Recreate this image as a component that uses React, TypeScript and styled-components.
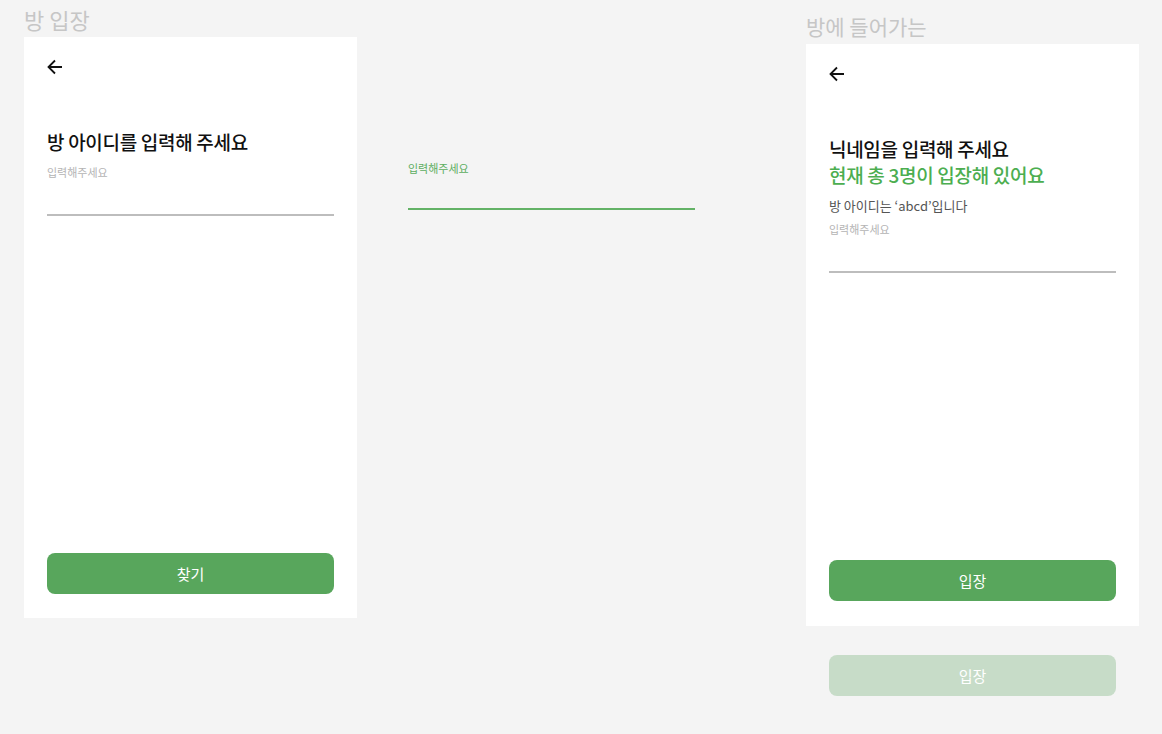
import React from 'react';
import styled, {createGlobalStyle} from 'styled-components';

const Colors = {
  canvas: '#f4f4f4',
  white: '#ffffff',
  black: '#111111',
  label: '#c6c6c6',
  placeholder: '#b4b4b4',
  line: '#bdbdbd',
  green: '#58a65c',
  greenText: '#4cae50',
  greenSoft: '#c7dcc8',
  gray: '#555555',
};

const GlobalStyle = createGlobalStyle`
  html, body {
    margin: 0;
    padding: 0;
    background: ${Colors.canvas};
  }
  body {
    font-family: 'Noto Sans CJK KR', 'Noto Sans', sans-serif;
  }
`;

const BackArrow = () => (
  <ArrowIcon viewBox="0 0 16 16" fill="none">
    <path d="M15 8H1.8M8 1.5L1.5 8L8 14.5" stroke="#111" strokeWidth="1.8" />
  </ArrowIcon>
);

const App = () => (
  <Canvas>
    <GlobalStyle/>
    <Board $x={24} $y={3}>
      <BoardLabel $size={22}>방 입장</BoardLabel>
      <Frame $height={581} $bottom={24}>
        <BackArrow/>
        <Title $top={54}>방 아이디를 입력해 주세요</Title>
        <Field $top={7}>
          <Placeholder>입력해주세요</Placeholder>
          <Underline/>
        </Field>
        <Spacer/>
        <Button>찾기</Button>
      </Frame>
    </Board>

    <FloatingField>
      <Placeholder $active>입력해주세요</Placeholder>
      <Underline $active/>
    </FloatingField>

    <Board $x={806} $y={10}>
      <BoardLabel $size={21}>방에 들어가는</BoardLabel>
      <Frame $height={582} $bottom={25}>
        <BackArrow/>
        <Title $top={54}>닉네임을 입력해 주세요</Title>
        <Title $green>현재 총 3명이 입장해 있어요</Title>
        <SubText>방 아이디는 ‘abcd’입니다</SubText>
        <Field $top={3}>
          <Placeholder>입력해주세요</Placeholder>
          <Underline/>
        </Field>
        <Spacer/>
        <Button>입장</Button>
      </Frame>
      <Button $disabled $outside>입장</Button>
    </Board>
  </Canvas>
);

export default App;

const Canvas = styled.div`
  position: relative;
  width: 1162px;
  height: 734px;
  overflow: hidden;
  background: ${Colors.canvas};
`;

const Board = styled.div<{$x: number; $y: number}>`
  position: absolute;
  left: ${p => p.$x}px;
  top: ${p => p.$y}px;
  width: 333px;
  display: flex;
  flex-direction: column;
`;

const BoardLabel = styled.div<{$size: number}>`
  font-size: ${p => p.$size}px;
  line-height: 32px;
  height: 34px;
  color: ${Colors.label};
  font-weight: 400;
`;

const Frame = styled.div<{$height: number; $bottom: number}>`
  height: ${p => p.$height}px;
  box-sizing: border-box;
  background: ${Colors.white};
  padding: 22px 23px ${p => p.$bottom}px;
  display: flex;
  flex-direction: column;
`;

const ArrowIcon = styled.svg`
  width: 16px;
  height: 16px;
  flex: none;
`;

const Title = styled.h1<{$top?: number; $green?: boolean}>`
  margin: ${p => p.$top || 0}px 0 0;
  font-size: 19px;
  line-height: 26px;
  font-weight: 500;
  letter-spacing: -0.3px;
  color: ${p => (p.$green ? Colors.greenText : Colors.black)};
`;

const SubText = styled.p`
  margin: 8px 0 0;
  font-size: 13px;
  line-height: 20px;
  color: ${Colors.gray};
`;

const Field = styled.div<{$top?: number}>`
  margin-top: ${p => p.$top || 0}px;
  display: flex;
  flex-direction: column;
`;

const FloatingField = styled.div`
  position: absolute;
  left: 408px;
  top: 158px;
  width: 287px;
  display: flex;
  flex-direction: column;
`;

const Placeholder = styled.span<{$active?: boolean}>`
  font-size: 11px;
  line-height: 20px;
  color: ${p => (p.$active ? '#5cae60' : Colors.placeholder)};
`;

const Underline = styled.div<{$active?: boolean}>`
  margin-top: ${p => (p.$active ? 30 : 32)}px;
  height: 2px;
  background: ${p => (p.$active ? '#63b266' : Colors.line)};
`;

const Spacer = styled.div`
  flex: 1;
`;

const Button = styled.button<{$disabled?: boolean; $outside?: boolean}>`
  height: 41px;
  border: none;
  border-radius: 8px;
  margin: ${p => (p.$outside ? '29px 23px 0' : '0')};
  background: ${p => (p.$disabled ? Colors.greenSoft : Colors.green)};
  color: ${Colors.white};
  font-family: 'Noto Sans CJK KR', 'Noto Sans', sans-serif;
  font-size: 15px;
  font-weight: 400;
  cursor: pointer;
`;
